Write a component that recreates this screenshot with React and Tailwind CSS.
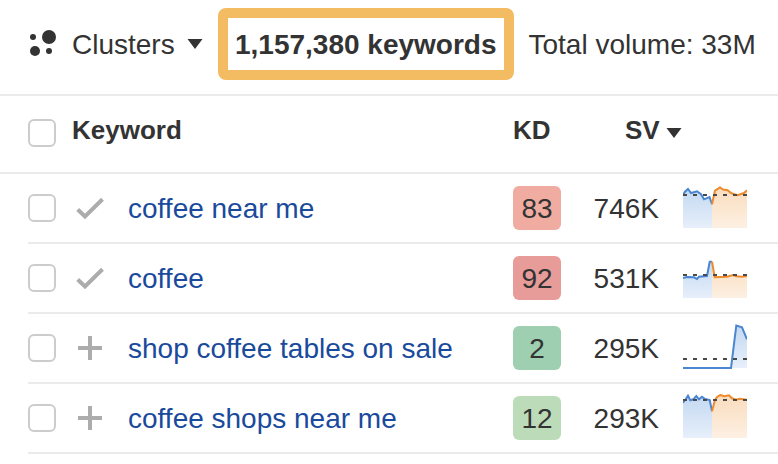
import { useState } from "react";

const rows = [
  {
    keyword: "coffee near me",
    added: true,
    kd: 83,
    kdClass: "bg-[#f0aca1]",
    sv: "746K",
    average: 9,
    past: "0,9 2,5.7 5,3 8,7 14,5.3 18,8.3 21,13.3 26.5,11 29,18.3",
    forecast: "29,18.3 32,4.7 37,1.5 40,3.5 44.5,4.3 48.5,7.3 54.5,9.3 61,7 64,4.3",
  },
  {
    keyword: "coffee",
    added: true,
    kd: 92,
    kdClass: "bg-[#e89c99]",
    sv: "531K",
    average: 19,
    past: "0,22 4,21 11,21.3 14,23 16,20.7 24,20 26.7,5.7 29,5.7",
    forecast: "29,5.7 31.7,21.3 44,20.7 50,19 53,20.3 59,20.7 64,20",
  },
  {
    keyword: "shop coffee tables on sale",
    added: false,
    kd: 2,
    kdClass: "bg-[#9dcfb0]",
    sv: "295K",
    average: 33,
    past: "0,42 48,42 53.3,-0.5 59,1.3 64,13.3",
  },
  {
    keyword: "coffee shops near me",
    added: false,
    kd: 12,
    kdClass: "bg-[#bcdcb9]",
    sv: "293K",
    average: 4,
    past: "0,6.7 2.7,3.3 5,-0.3 7.3,4.3 10.3,3.3 13.3,0 16,3.3 19,0.7 22,3 26.7,4 29,15.3",
    forecast: "29,15.3 32,4 34.3,0.7 37.3,-1 41.3,0.3 46,-0.7 49,2.3 53,3.7 56.7,2.7 64,3.7",
  },
];

function ClustersIcon() {
  return (
    <svg className="size-7" viewBox="0 0 28 28" fill="currentColor" aria-hidden="true">
      <circle cx="5" cy="7" r="3" />
      <circle cx="21" cy="7" r="7" />
      <circle cx="7" cy="21" r="5" />
      <circle cx="21" cy="21" r="3" />
    </svg>
  );
}

function Caret() {
  return (
    <svg className="h-[10px] w-4 shrink-0" viewBox="0 0 16 10" fill="currentColor" aria-hidden="true">
      <path d="M0.5 0h15L8 10z" />
    </svg>
  );
}

function Checkbox({ label }) {
  return (
    <input
      type="checkbox"
      aria-label={label}
      className="block size-7 appearance-none rounded-md border-2 border-[#cccccc] bg-white checked:bg-[#1a4a9c]"
    />
  );
}

function AddButton({ keyword, initial }) {
  const [added, setAdded] = useState(initial);

  return (
    <button
      type="button"
      aria-label={added ? `Remove ${keyword} from list` : `Add ${keyword} to list`}
      className="block text-[#acacac]"
      onClick={() => setAdded(!added)}
    >
      <svg className="size-7" viewBox="0 0 28 28" fill="none" stroke="currentColor" strokeWidth="4">
        {added ? <path d="M1.7 15.5L9 22.5L26.5 5.3" /> : <path d="M14 2v24M2 14h24" />}
      </svg>
    </button>
  );
}

function Sparkline({ id, average, past, forecast }) {
  const split = forecast ? 29 : 64;
  const start = forecast ? 0 : 48;

  return (
    <svg className="h-12 w-16" viewBox="0 -2 64 48" fill="none" aria-hidden="true">
      <defs>
        <linearGradient id={`past-${id}`} x1="0" y1="0" x2="0" y2="1">
          <stop offset="0" stopColor="#c3d9f2" />
          <stop offset="1" stopColor="#e7effa" />
        </linearGradient>
        <linearGradient id={`forecast-${id}`} x1="0" y1="0" x2="0" y2="1">
          <stop offset="0" stopColor="#f9dcbd" />
          <stop offset="1" stopColor="#fdf0e3" />
        </linearGradient>
      </defs>
      <polygon points={`${start},42 ${past} ${split},42`} fill={`url(#past-${id})`} />
      {forecast && <polygon points={`29,42 ${forecast} 64,42`} fill={`url(#forecast-${id})`} />}
      <polyline points={past} stroke="#4a86d2" strokeWidth="2" />
      {forecast && <polyline points={forecast} stroke="#ef8a2c" strokeWidth="2" />}
      <path d={`M0 ${average}H64`} stroke="#4a4a4a" strokeWidth="2" strokeDasharray="4 6" />
    </svg>
  );
}

export default function App() {
  return (
    <main className="bg-white font-['Liberation_Sans',Arial,sans-serif] text-[28px] leading-8 text-[#333333]">
      <div className="flex items-center border-b-2 border-[#ebebeb] pt-2 pb-3.5 pl-7 whitespace-nowrap">
        <label className="flex items-center">
          <ClustersIcon />
          <select aria-label="Group by" className="mr-3 ml-4 appearance-none bg-transparent pt-0.5">
            <option>Clusters</option>
          </select>
          <Caret />
        </label>
        <div className="ml-[15px] rounded-lg bg-[#f4bc62] p-[10px]">
          <div className="bg-white px-[7px] pt-[11px] pb-[9px] font-bold">1,157,380 keywords</div>
        </div>
        <div className="ml-[15px] pt-0.5">Total volume: 33M</div>
      </div>

      <table className="w-full table-fixed border-separate border-spacing-0 whitespace-nowrap">
        <colgroup>
          <col className="w-7" />
          <col className="w-11" />
          <col className="w-14" />
          <col />
          <col className="w-12" />
          <col className="w-[98px]" />
          <col className="w-[119px]" />
        </colgroup>
        <thead>
          <tr className="h-[78px] text-left text-[26px] *:border-b-2 *:border-[#ebebeb]">
            <td />
            <td className="pb-0.5">
              <Checkbox label="Select all keywords" />
            </td>
            <th className="pb-2" colSpan={2}>Keyword</th>
            <th className="pb-2">KD</th>
            <th className="pb-2" colSpan={2} aria-sort="descending">
              <button type="button" className="ml-16 flex items-center gap-1.5 font-bold">
                SV
                <span className="pt-1.5">
                  <Caret />
                </span>
              </button>
            </th>
          </tr>
        </thead>
        <tbody>
          {rows.map((row, idx) => (
            <tr key={row.keyword} className="h-[70px]">
              <td />
              <td className="border-b-2 border-[#ebebeb]">
                <Checkbox label={`Select ${row.keyword}`} />
              </td>
              <td className="border-b-2 border-[#ebebeb] pl-1">
                <AddButton keyword={row.keyword} initial={row.added} />
              </td>
              <td className="border-b-2 border-[#ebebeb] pt-0.5">
                <a href="#" className="text-[#1a4a9c]">{row.keyword}</a>
              </td>
              <td className="border-b-2 border-[#ebebeb]">
                <div className={`rounded-md pt-[7px] pb-[5px] text-center ${row.kdClass}`}>{row.kd}</div>
              </td>
              <td className="border-b-2 border-[#ebebeb] pt-0.5 text-right">{row.sv}</td>
              <td className="border-b-2 border-[#ebebeb] pl-6">
                <Sparkline id={idx} average={row.average} past={row.past} forecast={row.forecast} />
              </td>
            </tr>
          ))}
        </tbody>
      </table>
    </main>
  );
}
